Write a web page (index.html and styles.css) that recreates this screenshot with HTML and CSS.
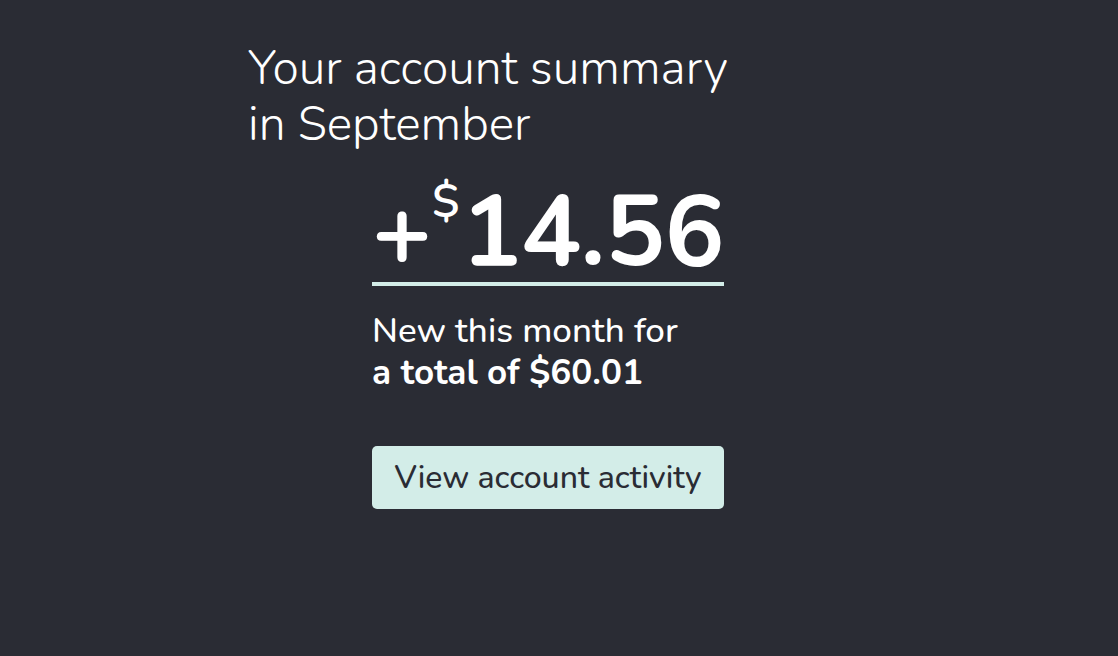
FILE: index.html
```html
<!DOCTYPE html>
<html>
<head>
<meta charset="utf-8">
<link rel="stylesheet" href="styles.css">
</head>
<body>
<main class="page">
  <h1 class="title">Your account summary<br>in September</h1>
  <section class="summary">
    <div class="amount"><span class="sign">+</span><span class="currency">$</span><span class="value">14.56</span></div>
    <p class="note">New this month for<br><strong>a total of $60.01</strong></p>
    <button class="action">View account activity</button>
  </section>
</main>
</body>
</html>
```
FILE: styles.css
```css
html, body {
  margin: 0;
  padding: 0;
  background: #2a2c34;
}
body {
  width: 1118px;
  height: 656px;
  overflow: hidden;
  font-family: "Nunito", "Lato", "Open Sans", sans-serif;
  color: #ffffff;
}
.page {
  padding: 40px 0 0 248px;
}
.title {
  margin: 0;
  font-size: 48px;
  font-weight: 300;
  line-height: 56px;
}
.summary {
  margin-left: 124px;
  width: 352px;
  margin-top: 30px;
}
.amount {
  display: flex;
  align-items: flex-start;
  border-bottom: 4px solid #d3ede8;
  height: 100px;
  line-height: 100px;
  font-weight: 700;
}
.sign {
  font-size: 100px;
}
.currency {
  font-size: 46px;
  line-height: 40px;
  font-weight: 600;
  margin: 0 2px 0 0;
}
.value {
  font-size: 100px;
  letter-spacing: -0.5px;
}
.note {
  margin: 24px 0 0 0;
  font-size: 35px;
  line-height: 42px;
  font-weight: 500;
}
.note strong {
  font-weight: 700;
}
.action {
  display: block;
  margin-top: 52px;
  width: 352px;
  height: 63px;
  border: none;
  border-radius: 5px;
  background: #d3ede8;
  color: #2a2c34;
  font-family: inherit;
  font-size: 32px;
  font-weight: 500;
  padding: 0;
}
```
